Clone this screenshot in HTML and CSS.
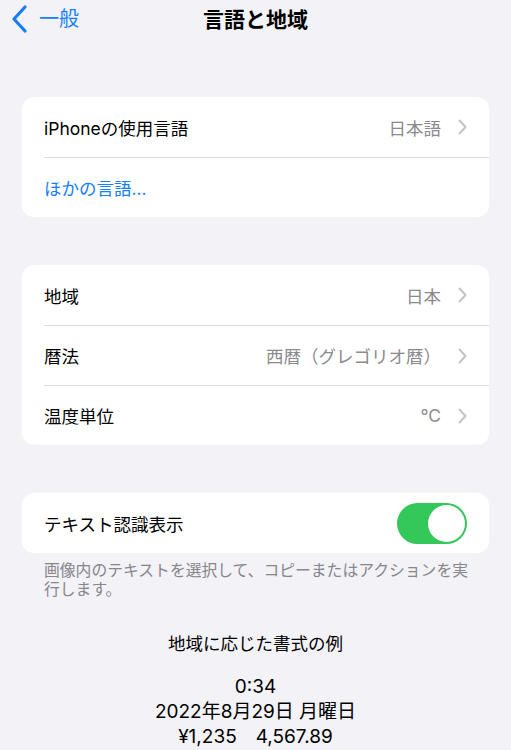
FILE: index.html
```
<!DOCTYPE html>
<html lang="ja">
<head>
  <meta charset="UTF-8">
  <meta name="viewport" content="width=device-width, initial-scale=1.0">
  <title>言語と地域</title>
  <link rel="stylesheet" href="styles.css">
</head>
<body>
  <div id="app">
    <div class="nav">
      <a class="back" href="#">
        <svg class="back-icon" width="16" height="28" viewBox="0 0 16 28">
          <path d="M14 2 L3 14 L14 26" fill="none" stroke="#157efb" stroke-width="3.2" stroke-linecap="round" stroke-linejoin="round"/>
        </svg>
        <span>一般</span>
      </a>
      <h1 class="title">言語と地域</h1>
    </div>

    <div class="group">
      <div class="row">
        <span class="label">iPhoneの使用言語</span>
        <span class="value">日本語</span>
        <svg class="chev" width="9" height="16" viewBox="0 0 9 16"><path d="M1.5 1.5 L7.5 8 L1.5 14.5" fill="none" stroke="#c4c4c7" stroke-width="2" stroke-linecap="round" stroke-linejoin="round"/></svg>
      </div>
      <div class="row">
        <span class="label link">ほかの言語...</span>
      </div>
    </div>

    <div class="group">
      <div class="row">
        <span class="label">地域</span>
        <span class="value">日本</span>
        <svg class="chev" width="9" height="16" viewBox="0 0 9 16"><path d="M1.5 1.5 L7.5 8 L1.5 14.5" fill="none" stroke="#c4c4c7" stroke-width="2" stroke-linecap="round" stroke-linejoin="round"/></svg>
      </div>
      <div class="row">
        <span class="label">暦法</span>
        <span class="value">西暦（グレゴリオ暦）</span>
        <svg class="chev" width="9" height="16" viewBox="0 0 9 16"><path d="M1.5 1.5 L7.5 8 L1.5 14.5" fill="none" stroke="#c4c4c7" stroke-width="2" stroke-linecap="round" stroke-linejoin="round"/></svg>
      </div>
      <div class="row">
        <span class="label">温度単位</span>
        <span class="value">°C</span>
        <svg class="chev" width="9" height="16" viewBox="0 0 9 16"><path d="M1.5 1.5 L7.5 8 L1.5 14.5" fill="none" stroke="#c4c4c7" stroke-width="2" stroke-linecap="round" stroke-linejoin="round"/></svg>
      </div>
    </div>

    <div class="group group-toggle">
      <div class="row">
        <span class="label">テキスト認識表示</span>
        <div class="switch on"><div class="knob"></div></div>
      </div>
    </div>
    <p class="footnote">画像内のテキストを選択して、コピーまたはアクションを実行します。</p>

    <div class="example">
      <p class="example-title">地域に応じた書式の例</p>
      <p>0:34</p>
      <p>2022年8月29日 月曜日</p>
      <p>¥1,235　4,567.89</p>
    </div>
  </div>
</body>
</html>
```
FILE: styles.css
```
body {
  margin: 0;
  padding: 0;
  background: #f2f2f7;
  font-family: Inter, "Noto Sans CJK JP", sans-serif;
  color: #000;
}
#app {
  width: 511px;
  height: 750px;
  overflow: hidden;
}
.nav {
  position: relative;
  height: 40px;
  display: flex;
  align-items: center;
  justify-content: center;
}
.back {
  position: absolute;
  left: 11px;
  top: 5px;
  display: flex;
  align-items: center;
  gap: 12px;
  color: #157efb;
  text-decoration: none;
  font-size: 20px;
  line-height: 28px;
}
.title {
  margin: 0;
  font-size: 21px;
  font-weight: bold;
  line-height: 28px;
}
.group {
  margin: 57px 22px 0;
  background: #fff;
  border-radius: 12px;
  overflow: hidden;
}
.group + .group {
  margin-top: 48px;
}
.row {
  display: flex;
  align-items: center;
  height: 60px;
  margin-left: 22px;
  padding-right: 22px;
  font-size: 17.5px;
  border-top: 1px solid #dcdce0;
  box-sizing: border-box;
}
.row:first-child {
  border-top: none;
}
.label {
  flex: 1;
}
.link {
  color: #157efb;
}
.value {
  color: #8a8a8e;
  margin-right: 17px;
}
.switch {
  width: 70px;
  height: 41px;
  border-radius: 21px;
  background: #e9e9eb;
  display: flex;
  align-items: center;
  padding: 2px;
  box-sizing: border-box;
}
.switch.on {
  background: #34c759;
  justify-content: flex-end;
}
.knob {
  width: 37px;
  height: 37px;
  border-radius: 50%;
  background: #fff;
}
.footnote {
  margin: 8px 34px 0 44px;
  font-size: 15.8px;
  line-height: 19px;
  color: #86868b;
}
.example {
  text-align: center;
  margin-top: 32px;
}
.example p {
  margin: 0;
  font-size: 19px;
  line-height: 25px;
}
.example .example-title {
  font-size: 17.5px;
  margin-bottom: 18px;
}
```
